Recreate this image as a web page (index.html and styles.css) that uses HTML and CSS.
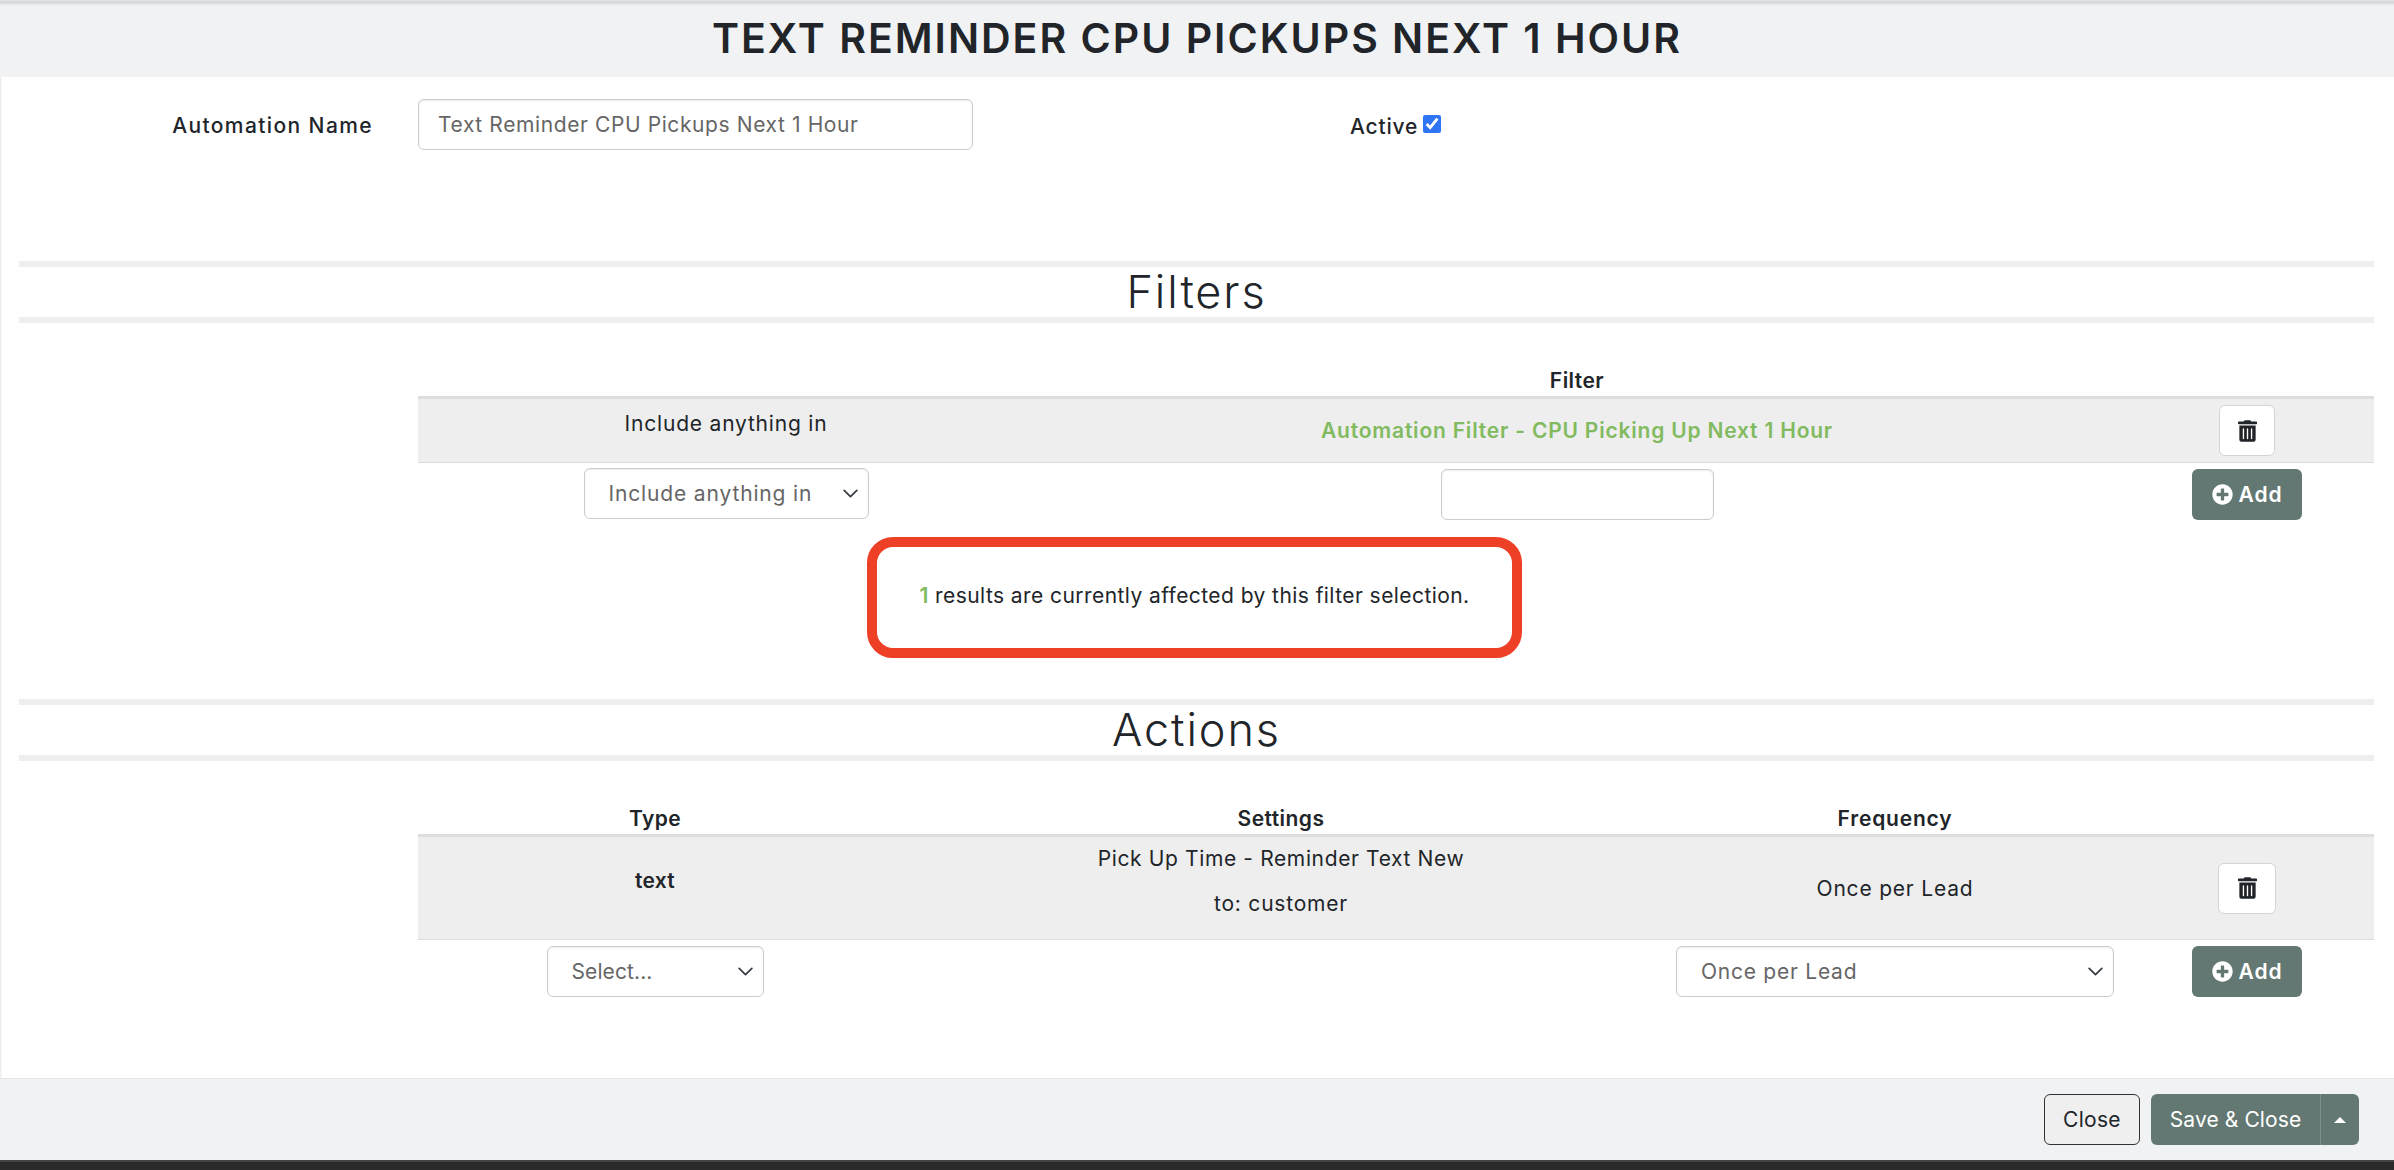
FILE: index.html
```html
<!DOCTYPE html>
<html lang="en">
<head>
<meta charset="utf-8">
<title>Text Reminder CPU Pickups Next 1 Hour</title>
<link rel="stylesheet" href="styles.css">
</head>
<body>
<div class="modal">
  <header class="modal-head"><h1>TEXT REMINDER CPU PICKUPS NEXT 1 HOUR</h1></header>
  <main class="modal-body">
    <div class="name-row">
      <label class="name-label" for="name">Automation Name</label>
      <input class="control name-input" id="name" type="text" value="Text Reminder CPU Pickups Next 1 Hour">
      <label class="active-label" for="active">Active</label>
      <input class="active-check" id="active" type="checkbox" checked>
    </div>

    <h2 class="section-title">Filters</h2>
    <div class="grid-table">
      <div class="tr cols-filter th-row"><div></div><div>Filter</div><div></div></div>
      <div class="tr cols-filter data-row filter-data">
        <div class="raised wide">Include anything in</div>
        <div class="green">Automation Filter - CPU Picking Up Next 1 Hour</div>
        <div><button class="btn-trash" type="button" aria-label="Delete"><svg class="i-trash" viewBox="0 0 448 512"><path d="M32 464a48 48 0 0 0 48 48h288a48 48 0 0 0 48-48V128H32zm272-256a16 16 0 0 1 32 0v224a16 16 0 0 1-32 0zm-96 0a16 16 0 0 1 32 0v224a16 16 0 0 1-32 0zm-96 0a16 16 0 0 1 32 0v224a16 16 0 0 1-32 0zM432 32H312l-9.4-18.7A24 24 0 0 0 281.1 0H166.8a23.72 23.72 0 0 0-21.4 13.3L136 32H16A16 16 0 0 0 0 48v32a16 16 0 0 0 16 16h416a16 16 0 0 0 16-16V48a16 16 0 0 0-16-16z"/></svg></button></div>
      </div>
      <div class="tr cols-filter add-row">
        <div><select class="control select sel-include"><option>Include anything in</option></select></div>
        <div><input class="control filter-input" type="text"></div>
        <div><button class="btn-add" type="button"><svg class="i-plus" viewBox="0 0 512 512"><path d="M256 8C119 8 8 119 8 256s111 248 248 248 248-111 248-248S393 8 256 8zm144 276c0 6.6-5.4 12-12 12h-92v92c0 6.6-5.4 12-12 12h-56c-6.6 0-12-5.4-12-12v-92h-92c-6.6 0-12-5.4-12-12v-56c0-6.6 5.4-12 12-12h92v-92c0-6.6 5.4-12 12-12h56c6.6 0 12 5.4 12 12v92h92c6.6 0 12 5.4 12 12v56z"/></svg>Add</button></div>
      </div>
    </div>

    <div class="callout"><span class="green-num">1</span>&nbsp;results are currently affected by this filter selection.</div>

    <h2 class="section-title">Actions</h2>
    <div class="grid-table">
      <div class="tr cols-action th-row"><div>Type</div><div>Settings</div><div class="wide">Frequency</div><div></div></div>
      <div class="tr cols-action data-row action-data">
        <div class="raised strong">text</div>
        <div class="settings"><p>Pick Up Time - Reminder Text New</p><p class="wide">to: customer</p></div>
        <div class="wide">Once per Lead</div>
        <div><button class="btn-trash" type="button" aria-label="Delete"><svg class="i-trash" viewBox="0 0 448 512"><path d="M32 464a48 48 0 0 0 48 48h288a48 48 0 0 0 48-48V128H32zm272-256a16 16 0 0 1 32 0v224a16 16 0 0 1-32 0zm-96 0a16 16 0 0 1 32 0v224a16 16 0 0 1-32 0zm-96 0a16 16 0 0 1 32 0v224a16 16 0 0 1-32 0zM432 32H312l-9.4-18.7A24 24 0 0 0 281.1 0H166.8a23.72 23.72 0 0 0-21.4 13.3L136 32H16A16 16 0 0 0 0 48v32a16 16 0 0 0 16 16h416a16 16 0 0 0 16-16V48a16 16 0 0 0-16-16z"/></svg></button></div>
      </div>
      <div class="tr cols-action add-row">
        <div><select class="control select sel-type"><option>Select...</option></select></div>
        <div></div>
        <div><select class="control select sel-freq"><option>Once per Lead</option></select></div>
        <div><button class="btn-add" type="button"><svg class="i-plus" viewBox="0 0 512 512"><path d="M256 8C119 8 8 119 8 256s111 248 248 248 248-111 248-248S393 8 256 8zm144 276c0 6.6-5.4 12-12 12h-92v92c0 6.6-5.4 12-12 12h-56c-6.6 0-12-5.4-12-12v-92h-92c-6.6 0-12-5.4-12-12v-56c0-6.6 5.4-12 12-12h92v-92c0-6.6 5.4-12 12-12h56c6.6 0 12 5.4 12 12v92h92c6.6 0 12 5.4 12 12v56z"/></svg>Add</button></div>
      </div>
    </div>
  </main>
  <footer class="modal-foot">
    <button class="btn-close" type="button">Close</button>
    <div class="split">
      <button class="btn-save" type="button">Save &amp; Close</button>
      <button class="btn-caret" type="button" aria-label="More"><span class="caret"></span></button>
    </div>
  </footer>
</div>
<div class="taskbar"></div>
</body>
</html>
```
FILE: styles.css
```css
* { box-sizing: border-box; }
html, body { margin: 0; height: 100%; }
body {
  display: flex;
  flex-direction: column;
  height: 100vh;
  overflow: hidden;
  background: #fff;
  color: #212529;
  font-family: "Inter", "Liberation Sans", sans-serif;
  font-size: 21px;
  letter-spacing: 0.3px;
}
button, input, select { font: inherit; letter-spacing: inherit; }

.modal { flex: 1; display: flex; flex-direction: column; min-height: 0; box-shadow: inset 2px 0 2px -1px #e8e8e8; }

.modal-head {
  height: 77px;
  padding-bottom: 1px;
  background: linear-gradient(#e6e7e9 0, #d3d4d6 2px, #e4e5e7 4px, #f1f2f4 6px);
  display: flex;
  align-items: center;
  justify-content: center;
}
.modal-head h1 {
  margin: 0;
  font-size: 41px;
  font-weight: 600;
  letter-spacing: 2px;
  color: #212529;
}

.modal-body { flex: 1; padding: 0 20px 0 19px; }

.name-row { display: flex; align-items: flex-start; height: 184px; padding-top: 22px; }
.name-label { width: 354px; margin-top: 14px; text-align: right; font-weight: 500; letter-spacing: 1.4px; }
.name-input { width: 555px; margin-left: 45px; letter-spacing: 0.6px; }
.active-label { margin-left: 377px; margin-top: 15px; font-weight: 500; letter-spacing: 0.8px; }
.active-check { width: 18px; height: 18px; margin: 16px 0 0 5px; accent-color: #2f74f5; }

.control {
  height: 51px;
  padding: 0 19px;
  background-color: #fff;
  color: #666;
  border: 1px solid #ccc;
  border-radius: 6px;
  box-shadow: inset 0 1px 2px rgba(0, 0, 0, 0.08);
  outline: none;
}
.select {
  appearance: none;
  padding-right: 40px;
  padding-left: 24px;
  background-image: url("data:image/svg+xml,%3Csvg xmlns='http://www.w3.org/2000/svg' viewBox='0 0 16 16'%3E%3Cpath fill='none' stroke='%23343a40' stroke-linecap='round' stroke-linejoin='round' stroke-width='1.6' d='M2 5l6 6 6-6'/%3E%3C/svg%3E");
  background-repeat: no-repeat;
  background-position: right 7px center;
  background-size: 21px 17px;
}
.sel-include { width: 285px; letter-spacing: 0.85px; }
.sel-type { width: 217px; letter-spacing: 0.1px; }
.sel-freq { width: 438px; letter-spacing: 0.75px; }
.filter-input { width: 273px; }

.section-title {
  margin: 0;
  height: 62px;
  border-top: 6px solid #eee;
  border-bottom: 6px solid #eee;
  text-align: center;
  font-size: 45px;
  font-weight: 300;
  line-height: 49px;
  letter-spacing: 1.9px;
  color: #212529;
}

.grid-table { margin: 43px 0 0 399px; }
.tr { display: grid; align-items: center; justify-items: center; text-align: center; }
.cols-filter { grid-template-columns: 616px 1086px 1fr; }
.cols-action { grid-template-columns: 474px 778px 450px 1fr; }
.th-row { height: 33px; padding-bottom: 1px; border-bottom: 3px solid #ddd; font-weight: 600; letter-spacing: 0.45px; }
.data-row { background: #eee; border-bottom: 1px solid #ddd; }
.filter-data { height: 64px; }
.action-data { height: 103px; }
.add-row { align-items: start; padding-top: 6px; }
.cols-filter .select { margin-top: -1px; }

.wide { letter-spacing: 0.8px; }
.raised { padding-bottom: 15px; }
.strong { font-weight: 600; }
.green { color: #82bb5f; font-weight: 600; letter-spacing: 0.8px; }
.green-num { color: #82bb5f; font-weight: 600; }
.settings p { margin: 0; line-height: 45px; letter-spacing: 0.63px; }
.settings p.wide { letter-spacing: 0.8px; }
.settings { margin-top: -15px; }

.btn-trash {
  width: 56px;
  height: 51px;
  display: inline-flex;
  align-items: center;
  justify-content: center;
  background: #fff;
  border: 1px solid #d4d4d4;
  border-radius: 6px;
  padding: 0;
}
.action-data .btn-trash { width: 58px; }
.i-trash { width: 19px; height: 22px; fill: #212529; }

.btn-add {
  width: 110px;
  height: 51px;
  display: inline-flex;
  align-items: center;
  justify-content: center;
  gap: 6px;
  background: #637872;
  color: #fff;
  border: 0;
  border-radius: 6px;
  font-weight: 600;
  letter-spacing: 0.9px;
  padding: 0;
}
.i-plus { width: 21px; height: 21px; fill: #fff; }

.callout {
  width: 655px;
  height: 121px;
  margin: 17px 0 41px 848px;
  display: flex;
  align-items: center;
  justify-content: center;
  padding-bottom: 5px;
  border: 10px solid #ee4026;
  border-radius: 26px;
  letter-spacing: 0.43px;
}

.modal-foot {
  height: 82px;
  flex: none;
  display: flex;
  justify-content: flex-end;
  align-items: flex-start;
  gap: 11px;
  padding: 15px 35px 0 0;
  background: #f1f2f4;
  border-top: 1px solid #e5e5e5;
}
.btn-close {
  width: 96px;
  height: 51px;
  background: #efefef;
  color: #212529;
  border: 1px solid #333;
  border-radius: 6px;
  padding: 0;
}
.split { display: flex; height: 51px; }
.btn-save {
  width: 169px;
  background: #637872;
  color: #fff;
  border: 0;
  border-radius: 6px 0 0 6px;
  letter-spacing: 0.1px;
  padding: 0;
}
.btn-caret {
  width: 39px;
  display: flex;
  align-items: center;
  justify-content: center;
  background: #637872;
  border: 0;
  border-left: 1px solid #7d8f8a;
  border-radius: 0 6px 6px 0;
  padding: 0;
}
.caret { border-left: 6px solid transparent; border-right: 6px solid transparent; border-bottom: 6px solid #fff; }

.taskbar { height: 10px; flex: none; background: #2a2a2a; border-top: 2px solid #444; }
```
